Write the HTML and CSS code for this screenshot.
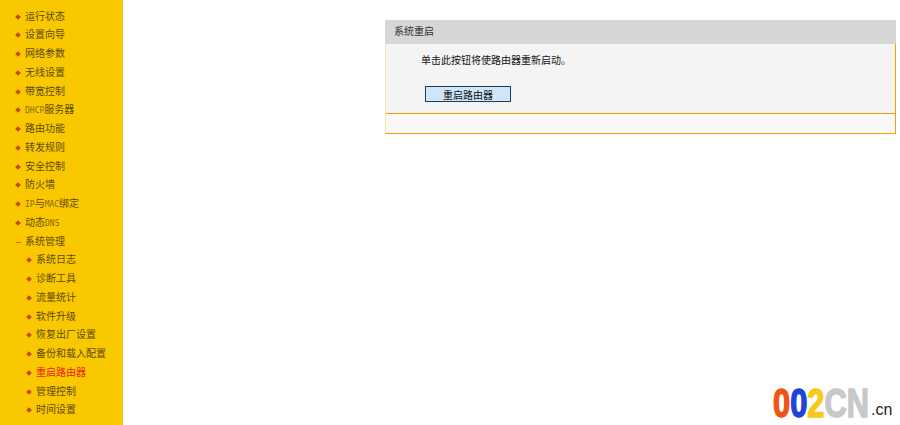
FILE: index.html
```html
<!DOCTYPE html>
<html lang="zh-CN">
<head>
    <meta charset="UTF-8">
    <title>重启路由器</title>
    <link rel="stylesheet" href="styles.css">
</head>
<body>
    <ul class="menu">
        <li>运行状态</li>
        <li>设置向导</li>
        <li>网络参数</li>
        <li>无线设置</li>
        <li>带宽控制</li>
        <li><span class="latin">DHCP</span>服务器</li>
        <li>路由功能</li>
        <li>转发规则</li>
        <li>安全控制</li>
        <li>防火墙</li>
        <li><span class="latin">IP</span>与<span class="latin">MAC</span>绑定</li>
        <li>动态<span class="latin">DNS</span></li>
        <li class="open">系统管理</li>
        <li class="sub">系统日志</li>
        <li class="sub">诊断工具</li>
        <li class="sub">流量统计</li>
        <li class="sub">软件升级</li>
        <li class="sub">恢复出厂设置</li>
        <li class="sub">备份和载入配置</li>
        <li class="sub active">重启路由器</li>
        <li class="sub">管理控制</li>
        <li class="sub">时间设置</li>
    </ul>

    <div class="content">
        <div class="panel">
            <div class="panel-title">系统重启</div>
            <div class="panel-body">
                <p>单击此按钮将使路由器重新启动。</p>
                <button type="button">重启路由器</button>
            </div>
            <div class="panel-foot"></div>
        </div>
    </div>

    <div class="logo">
        <span class="logo-word"><span class="red">0</span><span class="blue">0</span><span class="yellow">2</span><span class="grey">CN</span></span><span class="logo-cn">.cn</span>
    </div>
</body>
</html>
```

FILE: styles.css
```css
html, body {
    height: 100%;
}
body {
    margin: 0;
    display: flex;
    overflow: hidden;
    background-color: #fff;
    color: #2a2a2a;
    font-family: "Liberation Sans", "Noto Sans CJK SC", sans-serif;
    font-size: 10px;
}
.menu {
    width: 123px;
    height: 425px;
    box-sizing: border-box;
    flex: none;
    margin: 0;
    padding: 7.7px 0 0 25px;
    list-style: none;
    background-color: #fac800;
    color: #5e4a08;
}
.menu li {
    position: relative;
    height: 18.76px;
    line-height: 18.76px;
    white-space: nowrap;
}
.menu li::before {
    content: "";
    position: absolute;
    left: -9px;
    top: 7px;
    width: 4px;
    height: 4px;
    background-color: #c8481a;
    transform: rotate(45deg);
}
.menu .open::before {
    height: 1px;
    width: 5px;
    top: 9px;
    transform: none;
    background-color: #b5701a;
}
.menu .sub {
    margin-left: 11px;
}
.menu .active {
    color: #e8261a;
}
.latin {
    font-family: "DejaVu Sans Mono", monospace;
    font-size: 8px;
    opacity: 0.75;
}
.content {
    flex: 1;
    padding: 20px 4px 0 262px;
}
.panel {
    box-sizing: border-box;
    height: 114px;
    display: flex;
    flex-direction: column;
    border-right: 1px solid #f0a000;
    border-left: 1px solid #fbe3a0;
    border-bottom: 1px solid #f0a000;
    background-color: #f4f4f4;
}
.panel-title {
    height: 24px;
    line-height: 24px;
    margin: 0 -1px;
    padding-left: 9px;
    background-color: #d6d6d6;
    color: #333;
}
.panel-body {
    height: 69px;
    padding-left: 35px;
    border-bottom: 1px solid #f0a000;
}
.panel-body p {
    margin: 0;
    padding-top: 10px;
    line-height: 14px;
    color: #111;
}
.panel-body button {
    display: block;
    width: 86px;
    height: 16px;
    margin: 18px 0 0 4px;
    padding: 0;
    border: 1px solid #1c3a5a;
    background-color: #cfe6f8;
    color: #111;
    font: inherit;
}
.panel-foot {
    flex: 1;
    background-color: #f8f8f8;
}
.logo {
    position: absolute;
    left: 773px;
    top: 384px;
    display: flex;
    align-items: flex-end;
    white-space: nowrap;
}
.logo-word {
    display: inline-block;
    width: 95px;
    font-size: 40px;
    line-height: 38px;
    font-weight: bold;
    -webkit-text-stroke: 1.5px;
    transform: scaleX(0.77);
    transform-origin: left;
}
.logo-cn {
    margin-left: 3px;
    margin-bottom: 3px;
    color: #222;
    font-size: 16px;
    line-height: 18px;
}
.red { color: #ee5418; }
.blue { color: #1c44d8; }
.yellow { color: #f8c81c; }
.grey { color: #c8c8c8; }
```
